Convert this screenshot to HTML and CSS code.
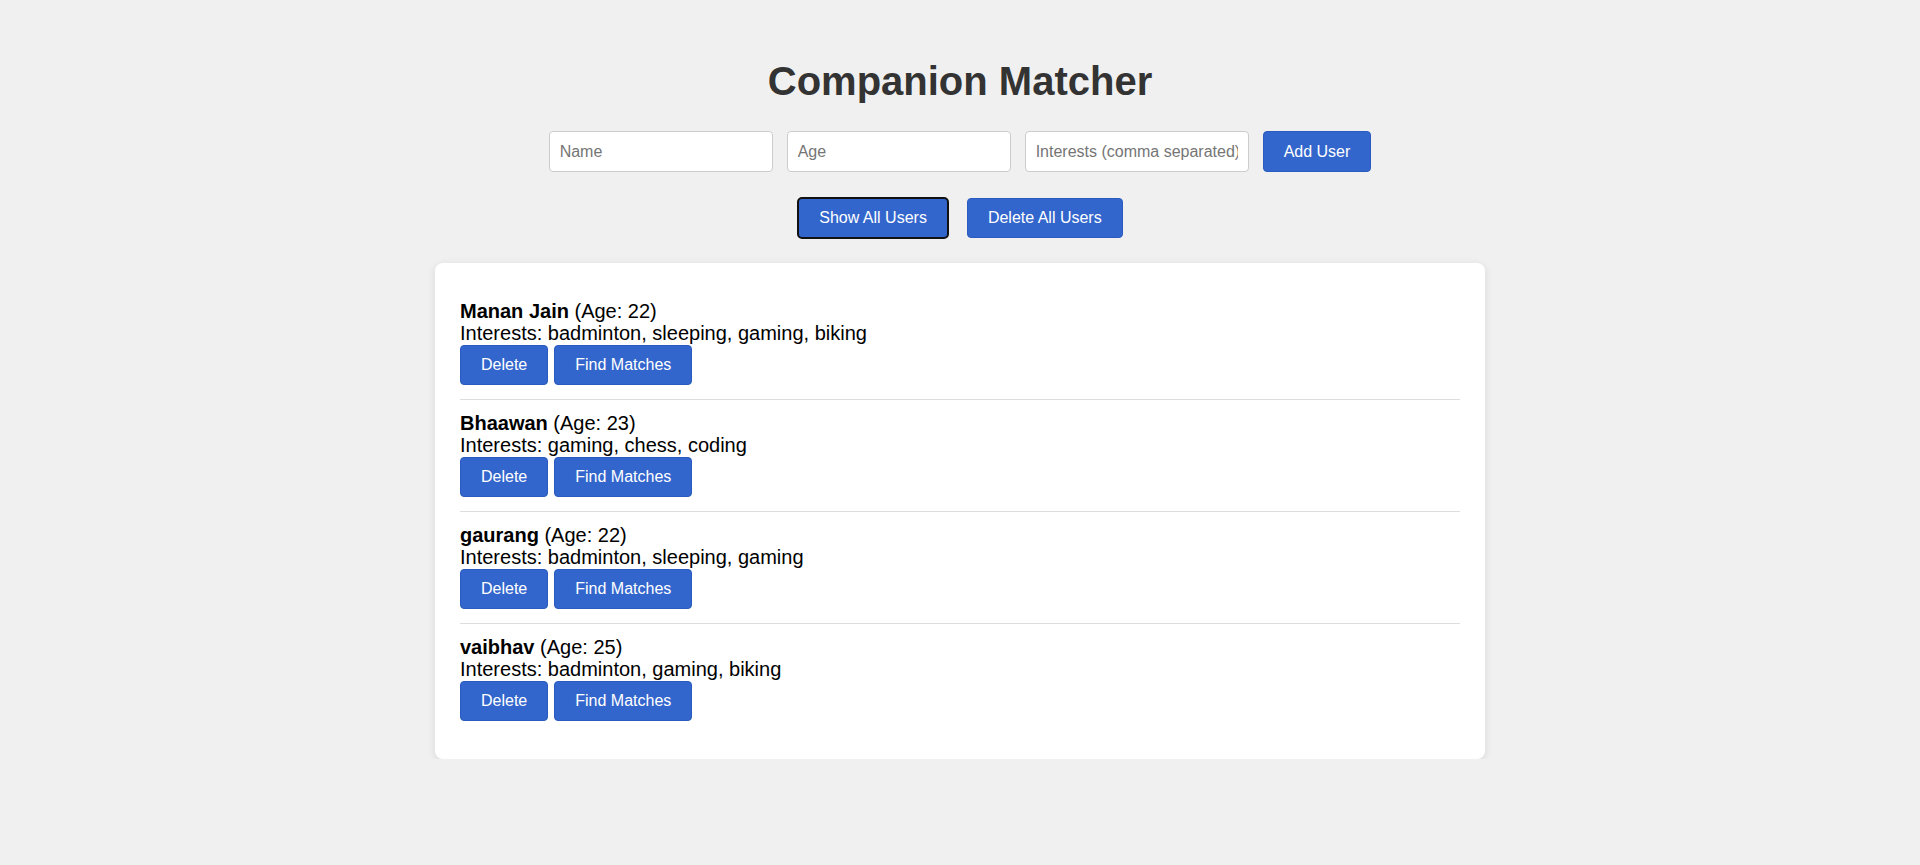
FILE: index.html
```html
<!DOCTYPE html>
<html lang="en">
<head>
<meta charset="utf-8">
<title>Companion Matcher</title>
<link rel="stylesheet" href="styles.css">
</head>
<body>
  <h1 class="title">Companion Matcher</h1>
  <div class="form-row">
    <input class="field" type="text" placeholder="Name">
    <input class="field" type="number" placeholder="Age">
    <input class="field" type="text" placeholder="Interests (comma separated)">
    <button class="btn">Add User</button>
  </div>
  <div class="actions">
    <button class="btn btn-focused">Show All Users</button>
    <button class="btn">Delete All Users</button>
  </div>
  <div class="card">
    <ul class="user-list">
      <li class="user">
        <div class="line"><strong>Manan Jain</strong> (Age: 22)</div>
        <div class="line">Interests: badminton, sleeping, gaming, biking</div>
        <div class="user-buttons">
          <button class="btn">Delete</button>
          <button class="btn">Find Matches</button>
        </div>
      </li>
      <li class="user">
        <div class="line"><strong>Bhaawan</strong> (Age: 23)</div>
        <div class="line">Interests: gaming, chess, coding</div>
        <div class="user-buttons">
          <button class="btn">Delete</button>
          <button class="btn">Find Matches</button>
        </div>
      </li>
      <li class="user">
        <div class="line"><strong>gaurang</strong> (Age: 22)</div>
        <div class="line">Interests: badminton, sleeping, gaming</div>
        <div class="user-buttons">
          <button class="btn">Delete</button>
          <button class="btn">Find Matches</button>
        </div>
      </li>
      <li class="user">
        <div class="line"><strong>vaibhav</strong> (Age: 25)</div>
        <div class="line">Interests: badminton, gaming, biking</div>
        <div class="user-buttons">
          <button class="btn">Delete</button>
          <button class="btn">Find Matches</button>
        </div>
      </li>
    </ul>
  </div>
</body>
</html>
```

FILE: styles.css
```css
* {
  box-sizing: border-box;
}

html, body {
  margin: 0;
  background: #f0f0f0;
}

body {
  font-family: "Liberation Sans", Arial, sans-serif;
  color: #000;
  padding-top: 58px;
}

.title {
  margin: 0 0 27px;
  text-align: center;
  font-size: 40px;
  font-weight: bold;
  line-height: 46px;
  color: #333;
}

.form-row {
  display: flex;
  justify-content: center;
  align-items: stretch;
  gap: 14px;
  margin-bottom: 25px;
}

.field {
  width: 224px;
  height: 41px;
  padding: 10px;
  border: 1px solid #ccc;
  border-radius: 4px;
  background: #fff;
  font-family: "Liberation Sans", Arial, sans-serif;
  font-size: 16px;
  color: #333;
  outline: none;
  -moz-appearance: textfield;
}

.field::placeholder {
  color: #757575;
}

.field::-webkit-inner-spin-button,
.field::-webkit-outer-spin-button {
  -webkit-appearance: none;
  margin: 0;
}

.btn {
  padding: 10px 20px;
  border: 1px solid #2b5bbf;
  border-radius: 4px;
  background: #3366cc;
  color: #fff;
  font-family: "Liberation Sans", Arial, sans-serif;
  font-size: 16px;
  line-height: 18px;
  cursor: pointer;
}

.btn-focused {
  border: 2px solid #111;
  border-radius: 5px;
}

.actions {
  display: flex;
  justify-content: center;
  align-items: center;
  gap: 18px;
  margin-bottom: 24px;
}

.card {
  width: 1050px;
  margin: 0 auto;
  padding: 25px 25px 24px;
  background: #fff;
  border-radius: 8px;
  box-shadow: 0 2px 8px rgba(0, 0, 0, 0.1);
}

.user-list {
  list-style: none;
  margin: 0;
  padding: 0;
}

.user {
  padding: 12px 0 14px;
  border-bottom: 1px solid #ddd;
}

.user:last-child {
  border-bottom: none;
}

.line {
  font-size: 20px;
  line-height: 22px;
}

.user-buttons {
  display: flex;
  gap: 6px;
  margin-top: 1px;
}
```
